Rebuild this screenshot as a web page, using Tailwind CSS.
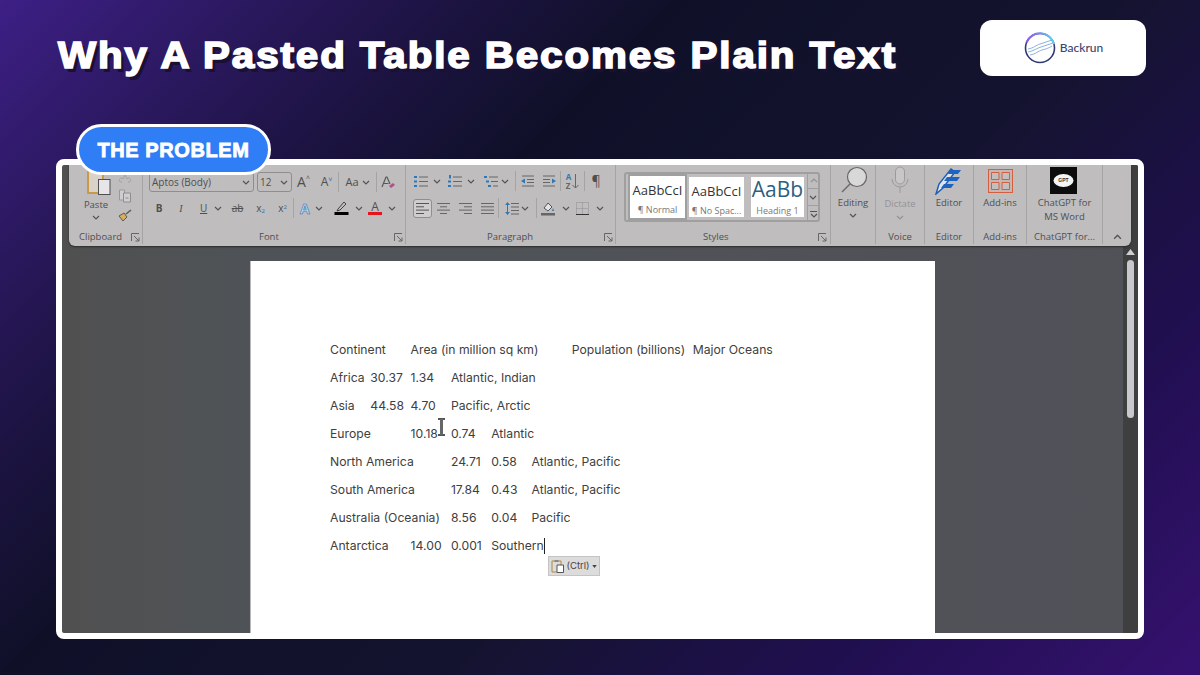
<!DOCTYPE html>
<html lang="en">
<head>
<meta charset="UTF-8" />
<title>Why A Pasted Table Becomes Plain Text</title>
<script src="https://cdn.jsdelivr.net/npm/@tailwindcss/browser@4"></script>
</head>
<body class="w-[1200px] h-[675px] overflow-hidden bg-[linear-gradient(135deg,#3d1f85_0%,#1f1447_22%,#0f1028_36%,#14132f_60%,#200f50_80%,#35116f_100%)]">

<!-- shared little icons -->
<svg class="hidden">
  <symbol id="chev" viewBox="0 0 8 5"><path d="M1 1l3 3 3-3" fill="none" stroke="#555" stroke-width="1.2"/></symbol>
  <symbol id="launch" viewBox="0 0 9 9"><path d="M.5 8V.5H8M3 3l5 5M8 4.5V8H4.5" fill="none" stroke="#666" stroke-width="1"/></symbol>
</svg>

<!-- Header -->
<header class="flex justify-between items-start pl-[58px] pr-[54px] pt-[20px] h-[159px]">
  <h1 class="mt-[14px] text-white font-bold text-[36px] leading-[44px] tracking-[1.7px] whitespace-nowrap origin-left scale-x-[1.12] [font-family:'Liberation_Sans',sans-serif] [-webkit-text-stroke:1.6px_white] [text-shadow:3px_4px_0_#1a1033]">Why A Pasted Table Becomes Plain Text</h1>
  <div class="w-[166px] h-[56px] bg-white rounded-xl flex items-center justify-center gap-[3px]">
    <svg width="34" height="34" viewBox="0 0 34 34">
      <defs>
        <linearGradient id="ring" x1="0" y1="0" x2="1" y2="0"><stop offset="0" stop-color="#8f55f0"/><stop offset="0.45" stop-color="#7d8cf0"/><stop offset="1" stop-color="#4fdcf0"/></linearGradient>
      </defs>
      <circle cx="17" cy="17" r="14.5" fill="none" stroke="#2f3a73" stroke-width="1.6"/>
      <path d="M3.500 11.500A14.5 14.5 0 0 1 31 13" fill="none" stroke="url(#ring)" stroke-width="2"/>
      <path d="M5 18c6-1 8-4 12-5s8-3 12-4M5 21c6-1 9-4 13-5s8-3 12-4M7 24c6-1 8-4 12-5s7-2 10-4" fill="none" stroke="#7fa8dc" stroke-width=".9"/>
    </svg>
    <span class="text-[12px] font-medium text-[#3b4570] [font-family:Lato,sans-serif]">Backrun</span>
  </div>
</header>

<!-- Screenshot frame -->
<main class="relative ml-[56px] w-[1088px] h-[480px] [font-family:'Open_Sans',sans-serif]">
  <div class="absolute z-20 left-[20px] top-[-35px] w-[195px] h-[51px] rounded-full bg-[#2f7ef5] border-[3px] border-white flex items-center justify-center text-white font-bold text-[20px] tracking-[0.6px] [font-family:'Liberation_Sans',sans-serif] [-webkit-text-stroke:0.8px_white]">THE PROBLEM</div>

  <div class="relative h-full border-[6px] border-white rounded-lg overflow-hidden bg-[#505052] bg-[linear-gradient(90deg,#505050_0%,#4f5357_18%,#515158_100%)]">
    <!-- Scrollbar -->
    <div class="absolute right-0 top-0 bottom-0 w-[15px] bg-[#3f3f3f] flex flex-col items-center pt-[84px]">
      <svg width="9" height="6" viewBox="0 0 9 6"><path d="M4.5 0L9 6H0z" fill="#d0cfd2"/></svg>
      <div class="mt-[5px] w-[7px] h-[158px] rounded-full bg-[#c9c8cc]"></div>
    </div>

    <!-- Ribbon -->
    <div class="relative z-10 ml-[7px] w-[1062px] h-[81px] bg-[#bfbdbe] rounded-b-md shadow-[0_1px_2px_#2a2a2a] flex items-start text-[#4f4f50]">

      <!-- Clipboard -->
      <section class="w-[74px] h-[79px] border-r border-[#a5a4a5] flex flex-col justify-between">
        <div class="flex pl-[8px]">
          <div class="w-[38px] flex flex-col items-center">
            <svg width="26" height="29" viewBox="0 0 26 29" class="mt-[1px] ml-[3px]">
              <path d="M3 3h15v24H3z" fill="#d8d2c8" stroke="#c99a45" stroke-width="2"/>
              <rect x="13.5" y="13.5" width="11.5" height="15" fill="#e6e5e8" stroke="#4f4f50"/>
            </svg>
            <span class="text-[9.5px] leading-[13px] mt-[3px]">Paste</span>
            <svg width="8" height="5" class="mt-[4px]"><use href="#chev"/></svg>
          </div>
          <div class="w-[16px] ml-[2px] flex flex-col items-center pt-[7px] gap-[6px]">
            <svg width="12" height="11" viewBox="0 0 12 11"><path d="M3 10a2 2 0 1 1 1-3l3-6M9 10a2 2 0 1 0-1-3L5 1" fill="none" stroke="#a3a1a2"/></svg>
            <svg width="14" height="14" viewBox="0 0 14 14"><path d="M1.5 1h5v10h-5z" fill="#cfcdd0" stroke="#9b999b"/><path d="M5.5 4h7v9h-7z" fill="#cfcdd0" stroke="#8f8d90"/><path d="M7.5 9h3" stroke="#8f8d90"/></svg>
            <svg width="14" height="13" viewBox="0 0 14 13"><path d="M1 7l5-3 3 4-4 4z" fill="#d7ae55" stroke="#5b5b5b"/><path d="M8 5l5-4" stroke="#5b5b5b" stroke-width="1.6"/></svg>
          </div>
        </div>
        <div class="flex items-center pl-[10px] pr-[2px] justify-between h-[14px]">
          <span class="text-[9.5px]">Clipboard</span>
          <svg width="9" height="9"><use href="#launch"/></svg>
        </div>
      </section>

      <!-- Font -->
      <section class="w-[263px] h-[79px] border-r border-[#a5a4a5] flex flex-col">
        <div class="flex items-center pl-[6px] mt-[7px] h-[20px]">
          <div class="w-[105px] h-[20px] border border-[#8f8d8f] rounded-[3px] flex items-center justify-between pl-[2px] pr-[3px] text-[10px]">Aptos (Body)<svg width="8" height="5"><use href="#chev"/></svg></div>
          <div class="ml-[3px] w-[35px] h-[20px] border border-[#8f8d8f] rounded-[3px] flex items-center justify-between pl-[2px] pr-[3px] text-[10px]">12<svg width="8" height="5"><use href="#chev"/></svg></div>
          <div class="w-[23px] text-center text-[14px] leading-none">A<span class="align-top text-[7px] leading-none">^</span></div>
          <div class="w-[23px] text-center text-[12px] leading-none">A<span class="align-top text-[7px] leading-none text-[#2f6fa8]">˅</span></div>
          <div class="w-px h-[20px] bg-[#a5a4a5]"></div>
          <div class="w-[37px] flex items-center justify-center gap-[3px] text-[11px]">Aa<svg width="8" height="5"><use href="#chev"/></svg></div>
          <div class="w-px h-[20px] bg-[#a5a4a5]"></div>
          <div class="w-[23px] flex justify-center">
            <svg width="15" height="15" viewBox="0 0 15 15"><path d="M1 12L5 2h1l3 7M2.500 8.500h5" fill="none" stroke="#5a5a5a" stroke-width="1.2"/><path d="M8 11l4-3 2 2-4 3z" fill="#b0508a"/></svg>
          </div>
        </div>
        <div class="flex items-center pl-[5px] mt-[6px] h-[20px] text-[10px]">
          <div class="w-[22px] text-center font-bold">B</div>
          <div class="w-[22px] text-center italic [font-family:'Liberation_Serif',serif]">I</div>
          <div class="w-[34px] flex items-center pl-[8px] gap-[7px]"><span class="underline">U</span><svg width="8" height="5"><use href="#chev"/></svg></div>
          <div class="w-[23px] text-center line-through">ab</div>
          <div class="w-[23px] text-center">x<sub class="text-[6px] text-[#2f6fa8]">2</sub></div>
          <div class="w-[21px] text-center">x<sup class="text-[6px] text-[#2f6fa8]">2</sup></div>
          <div class="w-px h-[20px] bg-[#a5a4a5]"></div>
          <div class="w-[34px] flex items-center pl-[6px] gap-[5px]"><span class="text-[14px] font-bold text-[#b9d4ea] [-webkit-text-stroke:0.6px_#2f78b8]">A</span><svg width="8" height="5"><use href="#chev"/></svg></div>
          <div class="w-[38px] flex items-center pl-[6px] gap-[6px]">
            <svg width="15" height="14" viewBox="0 0 15 14"><path d="M4 8l6-7 2 2-6 6-3 1z" fill="none" stroke="#444"/><rect x="0.5" y="11" width="14" height="3" fill="#000"/></svg>
            <svg width="8" height="5"><use href="#chev"/></svg>
          </div>
          <div class="w-[34px] flex items-center pl-[2px] gap-[6px]">
            <div class="w-[14px] flex flex-col items-center leading-[11px] text-[12px]">A<div class="w-[14px] h-[3px] bg-[#e8141c]"></div></div>
            <svg width="8" height="5"><use href="#chev"/></svg>
          </div>
        </div>
        <div class="mt-auto h-[14px] flex items-center justify-between pl-[116px] pr-[2px]">
          <span class="text-[9.5px]">Font</span>
          <svg width="9" height="9"><use href="#launch"/></svg>
        </div>
      </section>

      <!-- Paragraph -->
      <section class="w-[210px] h-[79px] border-r border-[#a5a4a5] flex flex-col">
        <div class="flex items-center pl-[4px] mt-[6px] h-[20px]">
          <div class="w-[34px] flex items-center justify-center gap-[5px]">
            <svg width="14" height="13" viewBox="0 0 14 13"><path d="M5 2h9M5 6.500h9M5 11h9" stroke="#666"/><path d="M0 1h3v2H0zM0 5.500h3v2H0zM0 10h3v2H0z" fill="#2f78b8"/></svg>
            <svg width="8" height="5"><use href="#chev"/></svg>
          </div>
          <div class="w-[35px] flex items-center justify-center gap-[5px]">
            <svg width="14" height="13" viewBox="0 0 14 13"><path d="M5 2h9M5 6.500h9M5 11h9" stroke="#666"/><path d="M1 0h2v3.500H1zM0 5.500h3v2H0zM0 10h3v2H0z" fill="#2f78b8"/></svg>
            <svg width="8" height="5"><use href="#chev"/></svg>
          </div>
          <div class="w-[36px] flex items-center pl-[5px] gap-[3px]">
            <svg width="14" height="13" viewBox="0 0 14 13"><path d="M5 2h9M7 6.500h7M9 11h5" stroke="#666"/><path d="M0 1h3v2H0zM2 5.500h3v2H2zM4 10h3v2H4z" fill="#2f78b8"/></svg>
            <svg width="8" height="5"><use href="#chev"/></svg>
          </div>
          <div class="w-px h-[20px] bg-[#a5a4a5]"></div>
          <div class="w-[22px] flex justify-center">
            <svg width="13" height="12" viewBox="0 0 13 12"><path d="M1 1h12M6 4.500h7M6 7.500h7M1 11h12" stroke="#666"/><path d="M0 6l4-2.500v5z" fill="#2f78b8"/></svg>
          </div>
          <div class="w-[22px] flex justify-center">
            <svg width="13" height="12" viewBox="0 0 13 12"><path d="M0 1h12M0 4.500h7M0 7.500h7M0 11h12" stroke="#666"/><path d="M13 6L9 3.500v5z" fill="#2f78b8"/></svg>
          </div>
          <div class="w-px h-[20px] bg-[#a5a4a5]"></div>
          <div class="w-[23px] flex items-center justify-center gap-[1px] text-[8px] leading-[9px] font-bold text-[#2f78b8]">
            <div class="flex flex-col">A<span class="text-[#666]">Z</span></div>
            <svg width="7" height="15" viewBox="0 0 7 15"><path d="M3.500 0v14M.5 11l3 3 3-3" fill="none" stroke="#666"/></svg>
          </div>
          <div class="w-px h-[20px] bg-[#a5a4a5]"></div>
          <div class="w-[22px] text-center text-[14px] leading-none">¶</div>
        </div>
        <div class="flex items-center pl-[7px] mt-[7px] h-[20px]">
          <div class="w-[19px] h-[19px] border border-[#8f8d8f] rounded-[3px] flex items-center justify-center bg-[#cfcdce]">
            <svg width="13" height="11" viewBox="0 0 13 11"><path d="M0 .5h13M0 3.800h8M0 7.100h13M0 10.500h8" stroke="#555"/></svg>
          </div>
          <div class="w-[22px] flex justify-center"><svg width="13" height="11" viewBox="0 0 13 11"><path d="M0 .5h13M3 3.800h7M0 7.100h13M3 10.500h7" stroke="#666"/></svg></div>
          <div class="w-[22px] flex justify-center"><svg width="13" height="11" viewBox="0 0 13 11"><path d="M0 .5h13M5 3.800h8M0 7.100h13M5 10.500h8" stroke="#666"/></svg></div>
          <div class="w-[22px] flex justify-center"><svg width="13" height="11" viewBox="0 0 13 11"><path d="M0 .5h13M0 3.800h13M0 7.100h13M0 10.500h13" stroke="#666"/></svg></div>
          <div class="w-px h-[20px] bg-[#a5a4a5]"></div>
          <div class="w-[37px] flex items-center pl-[6px] gap-[2px]">
            <svg width="14" height="13" viewBox="0 0 14 13"><path d="M6 1.500h8M6 5h8M6 8.500h8M6 12h8" stroke="#666"/><path d="M2.500 0l2.500 3H0zM2.500 13L0 10h5z" fill="#2f78b8"/><path d="M2.500 3v7" stroke="#2f78b8"/></svg>
            <svg width="8" height="5"><use href="#chev"/></svg>
          </div>
          <div class="w-px h-[20px] bg-[#a5a4a5]"></div>
          <div class="w-[36px] flex items-center pl-[4px] gap-[7px]">
            <svg width="14" height="15" viewBox="0 0 14 15"><path d="M3 7l4-5 4 4-4 4z" fill="#e5e4e5" stroke="#555"/><path d="M12 7l1 3h-2z" fill="#2f78b8"/><rect y="12" width="14" height="2.500" fill="#666"/></svg>
            <svg width="8" height="5"><use href="#chev"/></svg>
          </div>
          <div class="w-[34px] flex items-center pl-[3px] gap-[7px]">
            <svg width="13" height="13" viewBox="0 0 13 13"><path d="M.5.500h12v12H.5zM6.500.500v12M.5 6.500h12" fill="none" stroke="#8f8d90" stroke-dasharray="1 1"/><path d="M0 12.500h13" stroke="#333"/></svg>
            <svg width="8" height="5"><use href="#chev"/></svg>
          </div>
        </div>
        <div class="mt-auto h-[14px] flex items-center justify-between pl-[81px] pr-[2px]">
          <span class="text-[9.5px]">Paragraph</span>
          <svg width="9" height="9"><use href="#launch"/></svg>
        </div>
      </section>

      <!-- Styles -->
      <section class="w-[215px] h-[79px] border-r border-[#a5a4a5] flex flex-col">
        <div class="ml-[8px] mt-[7px] w-[196px] h-[50px] border-2 border-[#a09fa0] rounded-[3px] flex items-center pl-[2px]">
          <div class="w-[59px] h-[46px] border-[2px] border-[#a09fa0] flex flex-col items-center bg-white pt-[3px] whitespace-nowrap">
            <span class="text-[13px] leading-[22px] text-[#333]">AaBbCcI</span>
            <span class="text-[9px] leading-[18px] text-[#777]">¶ Normal</span>
          </div>
          <div class="ml-[2px] w-[55px] h-[40px] flex flex-col items-center bg-white pt-[3px] whitespace-nowrap">
            <span class="text-[13px] leading-[22px] text-[#333]">AaBbCcI</span>
            <span class="text-[9px] leading-[18px] text-[#777]">¶ No Spac...</span>
          </div>
          <div class="ml-[7px] w-[53px] h-[40px] flex flex-col items-center bg-white whitespace-nowrap">
            <span class="text-[21px] leading-[24px] text-[#2c5f7f]">AaBb</span>
            <span class="text-[9px] leading-[20px] text-[#777]">Heading 1</span>
          </div>
          <div class="ml-[3px] w-[12px] -mr-[2px] h-[50px] flex flex-col">
            <div class="flex-1 border-l border-[#a09fa0] flex items-center justify-center"><svg width="8" height="5" class="rotate-180 opacity-40"><use href="#chev"/></svg></div>
            <div class="flex-1 border border-[#a09fa0] flex items-center justify-center"><svg width="8" height="5"><use href="#chev"/></svg></div>
            <div class="flex-1 border-l border-[#a09fa0] flex flex-col gap-[1px] items-center justify-center"><div class="w-[7px] h-px bg-[#555]"></div><svg width="8" height="5"><use href="#chev"/></svg></div>
          </div>
        </div>
        <div class="mt-auto h-[14px] flex items-center justify-between pl-[87px] pr-[3px]">
          <span class="text-[9.5px]">Styles</span>
          <svg width="9" height="9"><use href="#launch"/></svg>
        </div>
      </section>

      <!-- Editing -->
      <section class="w-[45px] h-[79px] border-r border-[#a5a4a5] flex flex-col items-center">
        <svg width="28" height="27" viewBox="0 0 28 27" class="mt-[1px] ml-[2px]">
          <circle cx="17" cy="11" r="9.500" fill="#d9d8d9" stroke="#666" stroke-width="1.2"/>
          <path d="M10 18L2 26" stroke="#6a6a6a" stroke-width="1.4"/>
        </svg>
        <span class="text-[9.5px] leading-[13px] mt-[3px]">Editing</span>
        <svg width="8" height="5" class="mt-[4px]"><use href="#chev"/></svg>
      </section>

      <!-- Voice -->
      <section class="w-[49px] h-[79px] border-r border-[#a5a4a5] flex flex-col items-center">
        <svg width="20" height="28" viewBox="0 0 20 28" class="mt-[1px]">
          <rect x="5.500" y="1" width="9" height="17" rx="4.500" fill="#c8c7c8" stroke="#9b9a9b"/>
          <path d="M2 13a8 8 0 0 0 16 0M10 21v6" fill="none" stroke="#9b9a9b"/>
        </svg>
        <span class="text-[9.5px] leading-[13px] mt-[3px] text-[#949394]">Dictate</span>
        <svg width="8" height="5" class="mt-[5px] opacity-40"><use href="#chev"/></svg>
        <span class="mt-auto h-[14px] text-[9.5px] leading-[14px]">Voice</span>
      </section>

      <!-- Editor -->
      <section class="w-[49px] h-[79px] border-r border-[#a5a4a5] flex flex-col items-center">
        <svg width="28" height="28" viewBox="0 0 28 28" class="mt-[2px]">
          <path d="M1 27L4 17 16 2l4 3L8 21z" fill="#e4e4e6" stroke="#1f5fb8" stroke-width="1.5"/>
          <path d="M15 3h11l-3 4H13zM12 10h13l-3 4H9zM9 17h10l-3 4H6z" fill="#1f63c0"/>
        </svg>
        <span class="text-[9.5px] leading-[13px] mt-[1px]">Editor</span>
        <span class="mt-auto h-[14px] text-[9.5px] leading-[14px]">Editor</span>
      </section>

      <!-- Add-ins -->
      <section class="w-[53px] h-[79px] border-r border-[#a5a4a5] flex flex-col items-center">
        <svg width="25" height="24" viewBox="0 0 25 24" class="mt-[4px]">
          <rect x=".5" y=".5" width="24" height="23" fill="#c7b6b2" stroke="#d2603f"/>
          <path d="M3.500 3.500h7.500v7H3.500zM14 3.500h7.500v7H14zM3.500 13.500h7.500v7H3.500zM14 13.500h7.500v7H14z" fill="#c2bfc0" stroke="#d2603f"/>
        </svg>
        <span class="text-[9.5px] leading-[13px] mt-[3px]">Add-ins</span>
        <span class="mt-auto h-[14px] text-[9.5px] leading-[14px]">Add-ins</span>
      </section>

      <!-- ChatGPT -->
      <section class="w-[76px] h-[79px] border-r border-[#a5a4a5] flex flex-col items-center">
        <svg width="27" height="27" viewBox="0 0 27 27" class="mt-[2px] mr-[2px]">
          <rect width="27" height="27" fill="#0c0c0c"/>
          <ellipse cx="13.500" cy="13.500" rx="10" ry="6.500" fill="#f4f4f4"/>
          <text x="13.500" y="15" text-anchor="middle" font-size="5" font-weight="700" fill="#333" font-family="Liberation Sans">GPT</text>
        </svg>
        <span class="text-[9.5px] leading-[14px] mt-[2px] text-center">ChatGPT for<br />MS Word</span>
        <span class="mt-auto h-[14px] text-[9.5px] leading-[14px] whitespace-nowrap">ChatGPT for...</span>
      </section>

      <div class="flex-1 h-[79px] flex items-end justify-center pb-[4px]">
        <svg width="9" height="6" viewBox="0 0 8 5" class="rotate-180"><use href="#chev"/></svg>
      </div>
    </div>

    <!-- Document page -->
    <article class="relative ml-[188px] mt-[15px] w-[685px] h-[372px] bg-white border-l border-[#b9b9bd] pl-[79px] pt-[75px] text-[12.2px] leading-[28px] text-[#404040] [font-family:Inter,sans-serif]">
      <div class="grid grid-cols-[repeat(12,40.3px)] whitespace-nowrap"><span class="col-start-1">Continent</span><span class="col-start-3">Area (in million sq km)</span><span class="col-start-7">Population (billions)</span><span class="col-start-10">Major Oceans</span></div>
      <div class="grid grid-cols-[repeat(12,40.3px)] whitespace-nowrap"><span class="col-start-1">Africa</span><span class="col-start-2">30.37</span><span class="col-start-3">1.34</span><span class="col-start-4">Atlantic, Indian</span></div>
      <div class="grid grid-cols-[repeat(12,40.3px)] whitespace-nowrap"><span class="col-start-1">Asia</span><span class="col-start-2">44.58</span><span class="col-start-3">4.70</span><span class="col-start-4">Pacific, Arctic</span></div>
      <div class="grid grid-cols-[repeat(12,40.3px)] whitespace-nowrap"><span class="col-start-1">Europe</span><span class="col-start-3">10.18</span><span class="col-start-4">0.74</span><span class="col-start-5">Atlantic</span></div>
      <div class="grid grid-cols-[repeat(12,40.3px)] whitespace-nowrap"><span class="col-start-1">North America</span><span class="col-start-4">24.71</span><span class="col-start-5">0.58</span><span class="col-start-6">Atlantic, Pacific</span></div>
      <div class="grid grid-cols-[repeat(12,40.3px)] whitespace-nowrap"><span class="col-start-1">South America</span><span class="col-start-4">17.84</span><span class="col-start-5">0.43</span><span class="col-start-6">Atlantic, Pacific</span></div>
      <div class="grid grid-cols-[repeat(12,40.3px)] whitespace-nowrap"><span class="col-start-1">Australia (Oceania)</span><span class="col-start-4">8.56</span><span class="col-start-5">0.04</span><span class="col-start-6">Pacific</span></div>
      <div class="grid grid-cols-[repeat(12,40.3px)] whitespace-nowrap"><span class="col-start-1">Antarctica</span><span class="col-start-3">14.00</span><span class="col-start-4">0.001</span><span class="col-start-5 flex items-center">Southern<i class="inline-block shrink-0 w-px h-[16px] bg-[#222]"></i></span></div>

      <!-- I-beam cursor -->
      <svg width="9" height="18" viewBox="0 0 9 18" class="absolute left-[186px] top-[157px]">
        <path d="M1 1h7M1 17h7" fill="none" stroke="#555" stroke-width="2"/>
        <path d="M4.500 1v16" fill="none" stroke="#666" stroke-width="3"/>
      </svg>

      <!-- Paste options -->
      <div class="absolute left-[297px] top-[295px] w-[52px] h-[20px] bg-[#dcdcdc] border border-[#c4c4c4] flex items-center justify-center gap-[2px] text-[9.5px] text-[#444]">
        <svg width="13" height="14" viewBox="0 0 13 14"><path d="M1 2h9v11H1z" fill="none" stroke="#b08a3c"/><path d="M6 6h6.500v7.500H6z" fill="#fff" stroke="#555"/><path d="M3.500 1h4v2h-4z" fill="#888"/></svg>
        (Ctrl)<svg width="5" height="3" viewBox="0 0 6 4"><path d="M0 0h6L3 4z" fill="#444"/></svg>
      </div>
    </article>
  </div>
</main>
</body>
</html>
